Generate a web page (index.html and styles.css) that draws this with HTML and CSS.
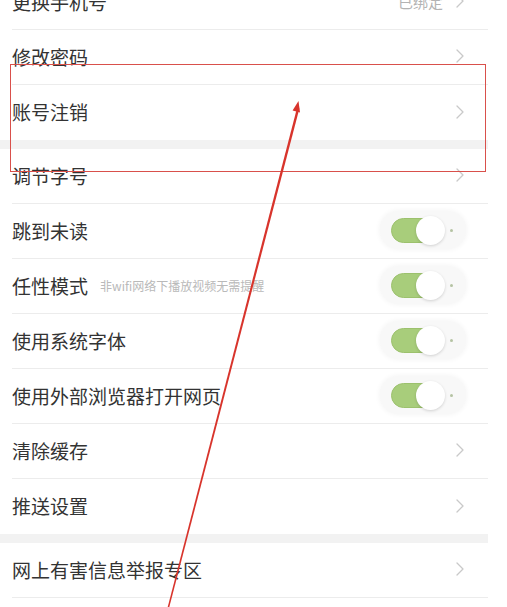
FILE: index.html
```html
<!DOCTYPE html>
<html lang="zh-CN">
<head>
<meta charset="utf-8">
<title>设置</title>
<link rel="stylesheet" href="styles.css">
</head>
<body>
<div class="page">
  <div class="list">
    <div class="group">
      <div class="row">
        <span class="label">更换手机号</span>
        <span class="spacer"></span>
        <span class="value">已绑定</span>
        <svg class="chev" viewBox="0 0 8 14" width="8" height="14"><path d="M1 1 L7 7 L1 13"/></svg>
      </div>
      <div class="row">
        <span class="label">修改密码</span>
        <span class="spacer"></span>
        <svg class="chev" viewBox="0 0 8 14" width="8" height="14"><path d="M1 1 L7 7 L1 13"/></svg>
      </div>
      <div class="row">
        <span class="label">账号注销</span>
        <span class="spacer"></span>
        <svg class="chev" viewBox="0 0 8 14" width="8" height="14"><path d="M1 1 L7 7 L1 13"/></svg>
      </div>
    </div>
    <div class="group">
      <div class="row">
        <span class="label">调节字号</span>
        <span class="spacer"></span>
        <svg class="chev" viewBox="0 0 8 14" width="8" height="14"><path d="M1 1 L7 7 L1 13"/></svg>
      </div>
      <div class="row">
        <span class="label">跳到未读</span>
        <span class="spacer"></span>
        <span class="switch"><span class="track"><span class="knob"></span></span><span class="dot"></span></span>
      </div>
      <div class="row">
        <span class="label">任性模式</span>
        <span class="sub">非wifi网络下播放视频无需提醒</span>
        <span class="spacer"></span>
        <span class="switch"><span class="track"><span class="knob"></span></span><span class="dot"></span></span>
      </div>
      <div class="row">
        <span class="label">使用系统字体</span>
        <span class="spacer"></span>
        <span class="switch"><span class="track"><span class="knob"></span></span><span class="dot"></span></span>
      </div>
      <div class="row">
        <span class="label">使用外部浏览器打开网页</span>
        <span class="spacer"></span>
        <span class="switch"><span class="track"><span class="knob"></span></span><span class="dot"></span></span>
      </div>
      <div class="row">
        <span class="label">清除缓存</span>
        <span class="spacer"></span>
        <svg class="chev" viewBox="0 0 8 14" width="8" height="14"><path d="M1 1 L7 7 L1 13"/></svg>
      </div>
      <div class="row">
        <span class="label">推送设置</span>
        <span class="spacer"></span>
        <svg class="chev" viewBox="0 0 8 14" width="8" height="14"><path d="M1 1 L7 7 L1 13"/></svg>
      </div>
    </div>
    <div class="group">
      <div class="row row-open">
        <span class="label">网上有害信息举报专区</span>
        <span class="spacer"></span>
        <svg class="chev" viewBox="0 0 8 14" width="8" height="14"><path d="M1 1 L7 7 L1 13"/></svg>
      </div>
    </div>
  </div>

  <div class="mark-box"></div>
  <svg class="mark-arrow" viewBox="0 0 507 607" width="507" height="607">
    <polygon class="shaft" points="297,108 299.4,108.6 169.3,607 167.7,607"/>
    <polygon class="head" points="298.5,101 300,112.6 292.6,110.6"/>
  </svg>
</div>
</body>
</html>
```

FILE: styles.css
```css
* {
  box-sizing: border-box;
}

html, body {
  margin: 0;
  padding: 0;
  background: #ffffff;
}

body {
  font-family: "Noto Sans CJK SC", "Noto Sans", sans-serif;
  color: #333333;
}

.page {
  position: relative;
  width: 507px;
  height: 607px;
  overflow: hidden;
  background: #ffffff;
}

.list {
  width: 488px;
  margin-top: -25px;
  display: flex;
  flex-direction: column;
  gap: 9px;
  background: #f2f2f2;
}

.group {
  background: #ffffff;
  display: flex;
  flex-direction: column;
}

.row {
  height: 55px;
  margin-left: 12px;
  padding-right: 22px;
  padding-bottom: 2px;
  display: flex;
  align-items: center;
  border-bottom: 1px solid #ececec;
}

.group .row:last-child {
  border-bottom: none;
}

.group .row.row-open {
  border-bottom: 1px solid #ececec;
}

.label {
  font-size: 19px;
  line-height: 1;
  color: #333333;
  white-space: nowrap;
}

.sub {
  margin-left: 12px;
  font-size: 12px;
  color: #b9b9b9;
  white-space: nowrap;
}

.spacer {
  flex: 1;
}

.value {
  font-size: 15px;
  color: #b3b3b3;
  margin-right: 13px;
}

.chev {
  display: block;
  margin-right: 2px;
  fill: none;
  stroke: #c9c9c9;
  stroke-width: 1.3;
  stroke-linecap: round;
  stroke-linejoin: round;
}

.switch {
  width: 86px;
  height: 38px;
  border-radius: 19px;
  background: #f8f8f8;
  box-shadow: 0 0 5px 1px #f5f5f5;
  display: flex;
  align-items: center;
  padding-left: 11px;
}

.track {
  width: 53px;
  height: 25px;
  border-radius: 13px;
  background: #a8cd7b;
  border: 1px solid #9cc16d;
  display: flex;
  align-items: center;
  justify-content: flex-end;
}

.knob {
  width: 29px;
  height: 29px;
  flex-shrink: 0;
  margin-right: -2px;
  border-radius: 50%;
  background: #ffffff;
  box-shadow: 0 1px 3px rgba(0, 0, 0, 0.16);
}

.dot {
  width: 3px;
  height: 3px;
  margin-left: 6px;
  border-radius: 50%;
  background: #b5c3a3;
}

.mark-box {
  position: absolute;
  left: 10px;
  top: 64px;
  width: 476px;
  height: 108px;
  border: 1.5px solid #d9504b;
}

.mark-arrow {
  position: absolute;
  left: 0;
  top: 0;
}

.mark-arrow .shaft,
.mark-arrow .head {
  fill: #d8342c;
}
```
